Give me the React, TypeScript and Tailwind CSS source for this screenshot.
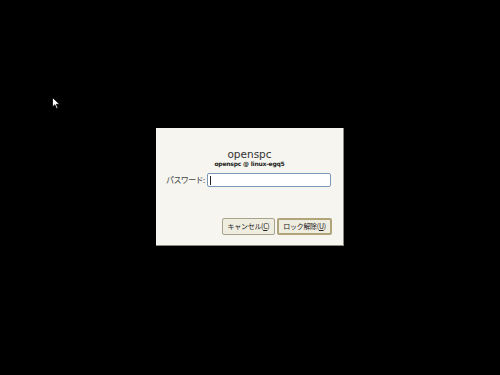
import React from "react";

export default function App() {
  return (
    <div className="relative w-[500px] h-[375px] bg-black overflow-hidden font-['DejaVu_Sans','Noto_Sans_CJK_JP',sans-serif]">
      {/* mouse pointer */}
      <svg className="absolute left-[52px] top-[97px]" width="9" height="13" viewBox="0 0 9 13">
        <path d="M0.5 0.5 L0.5 10 L2.8 7.8 L4.6 11.8 L6 11.2 L4.3 7.3 L7.6 7.3 Z" fill="#fff" stroke="#000" strokeWidth="0.8" />
      </svg>

      <div className="pt-[128px] pl-[156px]">
        <div className="w-[188px] h-[118px] bg-[#f6f5ef] border-r border-b border-[#8a8a84] flex flex-col">
          <div className="mt-[20px] text-center text-[10.5px] leading-[12px] text-[#333]">openspc</div>
          <div className="text-center text-[6px] leading-[8px] font-bold text-[#222] tracking-[-0.2px]">openspc @ linux-egq5</div>

          <div className="flex items-center mt-[5px] pl-[10px] h-[14px]">
            <span className="text-[8px] leading-[10px] text-[#444] w-[41px] whitespace-nowrap font-['Noto_Sans_CJK_JP',sans-serif] tracking-[-0.6px]">パスワード:</span>
            <div className="w-[124px] h-[14px] bg-white border border-[#7b98b8] rounded-[2px] flex items-center pl-[2px]">
              <div className="w-px h-[9px] bg-[#222]" />
            </div>
          </div>

          <div className="flex justify-end gap-[2px] mt-[31px] pr-[11px]">
            <div className="w-[53px] h-[17px] bg-[#efece0] border border-[#a8a38c] rounded-[2px] flex items-center justify-center text-[7px] text-[#222] whitespace-nowrap font-['Noto_Sans_CJK_JP',sans-serif] tracking-[-0.3px]">
              キャンセル(<span className="underline">C</span>)
            </div>
            <div className="w-[55px] h-[17px] bg-[#efece0] border-2 border-[#b0a47a] rounded-[2px] flex items-center justify-center text-[7px] text-[#222] whitespace-nowrap font-['Noto_Sans_CJK_JP',sans-serif] tracking-[-0.3px]">
              ロック解除(<span className="underline">U</span>)
            </div>
          </div>
        </div>
      </div>
    </div>
  );
}
